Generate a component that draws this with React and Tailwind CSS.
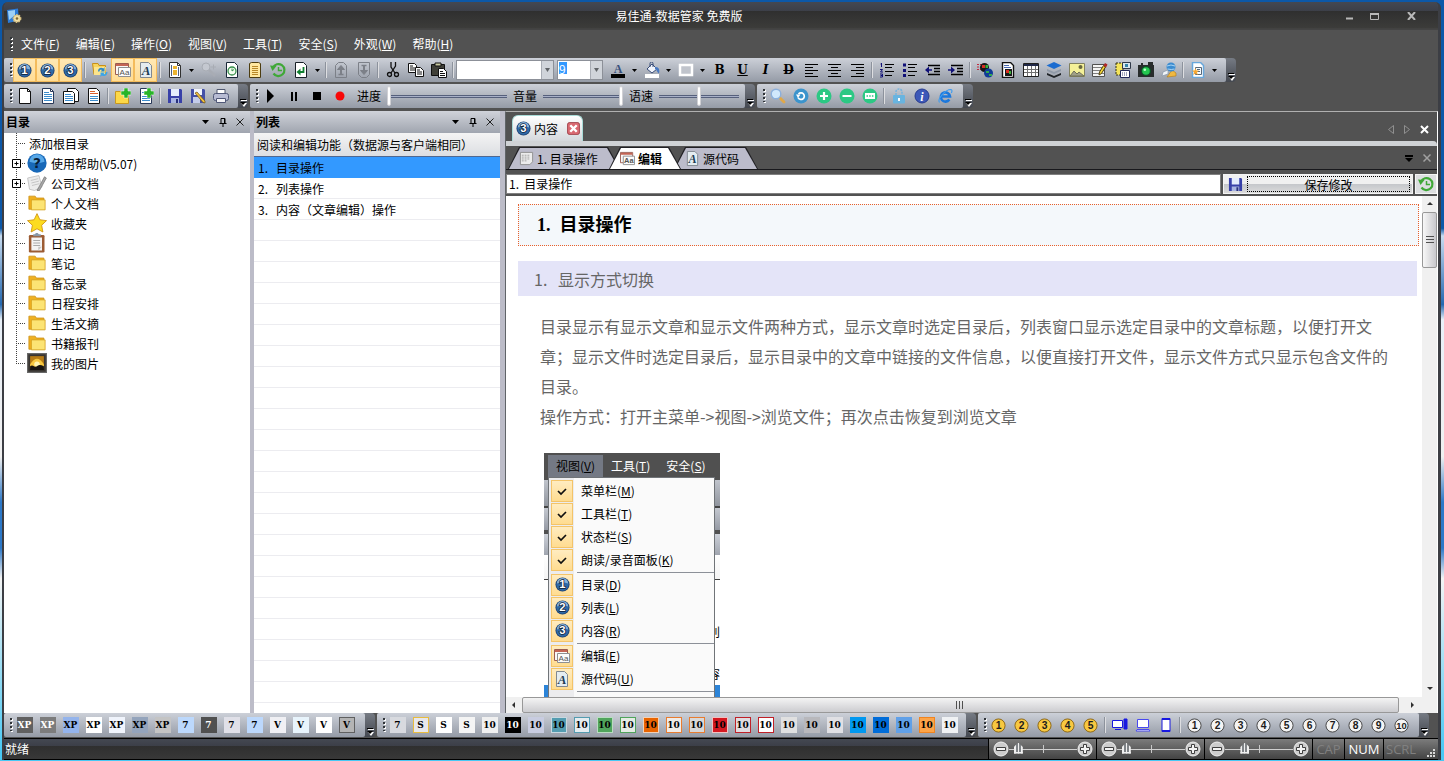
import { useState } from "react";

const menus = [
  ["文件", "F"],
  ["编辑", "E"],
  ["操作", "O"],
  ["视图", "V"],
  ["工具", "T"],
  ["安全", "S"],
  ["外观", "W"],
  ["帮助", "H"],
];

const treeItems = [
  { name: "添加根目录" },
  { name: "使用帮助(V5.07)", icon: "help", expand: true },
  { name: "公司文档", icon: "docs", expand: true },
  { name: "个人文档", icon: "folder" },
  { name: "收藏夹", icon: "star" },
  { name: "日记", icon: "clipboard" },
  { name: "笔记", icon: "folder" },
  { name: "备忘录", icon: "folder" },
  { name: "日程安排", icon: "folder" },
  { name: "生活文摘", icon: "folder" },
  { name: "书籍报刊", icon: "folder" },
  { name: "我的图片", icon: "photo" },
];

const articles = ["目录操作", "列表操作", "内容（文章编辑）操作"];

const themesA = [
  ["XP", "bg-[#606060] text-white"],
  ["XP", "bg-[#7c7c7c] text-white"],
  ["XP", "bg-[#94b4ec] text-black"],
  ["XP", "bg-white text-black"],
  ["XP", "bg-[#f0f4fc] text-black"],
  ["XP", "bg-[#94a4bc] text-black"],
  ["XP", "bg-[#c4c4c4] text-black"],
  ["7", "bg-[#bcd8fc] text-black"],
  ["7", "bg-[#505050] text-white"],
  ["7", "bg-[#e0e0e8] text-black"],
  ["7", "bg-[#bcd8fc] text-black"],
  ["V", "bg-[#f0f0f4] text-black"],
  ["V", "bg-[#e8f4fc] text-black"],
  ["V", "bg-white text-black"],
  ["V", "border border-[#606060] bg-[#b4b4b4] text-black"],
];

const themesB = [
  ["7", "bg-[#d8dadf] text-black"],
  ["S", "border border-[#e8bc40] bg-[#e8e8ec] text-black"],
  ["S", "bg-white text-black"],
  ["S", "bg-[#f4f4f4] text-black"],
  ["10", "bg-[#f0f0f0] text-black"],
  ["10", "bg-black text-white"],
  ["10", "bg-[#c8cce0] text-black"],
  ["10", "border border-[#c8d8e0] bg-[#549cb0] text-black"],
  ["10", "border border-[#549cb0] bg-[#e4ecf0] text-black"],
  ["10", "border border-[#b8dcc0] bg-[#50a45c] text-black"],
  ["10", "border border-[#50a45c] bg-[#e4ece4] text-black"],
  ["10", "border border-[#f0d0b8] bg-[#e86400] text-black"],
  ["10", "border border-[#e87c30] bg-[#f0ece8] text-black"],
  ["10", "border border-[#e87c30] bg-[#d8d8d8] text-black"],
  ["10", "border border-[#f0c0c0] bg-[#d41820] text-black"],
  ["10", "border border-[#c02028] bg-[#e0dce0] text-black"],
  ["10", "border border-[#c02028] bg-white text-black"],
  ["10", "bg-[#e0e0e0] text-black"],
  ["10", "bg-[#b8b8bc] text-black"],
  ["10", "bg-[#e0e0e4] text-black"],
  ["10", "bg-[#0098f0] text-black"],
  ["10", "bg-[#006cd8] text-black"],
  ["10", "bg-[#60a0e8] text-black"],
  ["10", "border border-[#f08420] bg-[#fca448] text-black"],
  ["10", "bg-[#f0f2f4] text-black"],
];

function Svg({ children, size = 16, className = "" }) {
  return (
    <svg width={size} height={size} viewBox="0 0 16 16" className={`shrink-0 ${className}`} aria-hidden="true">
      {children}
    </svg>
  );
}

function Ball({ n }) {
  return (
    <Svg size={15}>
      <circle cx="8" cy="8" r="7.5" fill="#1c3f70" />
      <circle cx="8" cy="8" r="6.6" fill="#2f69a6" />
      <path d="M2 7a6 6 0 0 1 12 0Q8 4.5 2 7Z" fill="#86b0d8" />
      <text
        x="8"
        y="12.2"
        textAnchor="middle"
        fontSize="12"
        fontWeight="700"
        fontFamily="Liberation Sans, sans-serif"
        fill="#fff"
        stroke="#0c1c38"
        strokeWidth="1.6"
        paintOrder="stroke"
      >
        {n}
      </text>
    </Svg>
  );
}

function Coin({ n, gold }) {
  return (
    <Svg size={15}>
      <circle cx="8" cy="8" r="7" fill={gold ? "#f8c840" : "#f4f4f4"} stroke={gold ? "#8a6414" : "#404040"} />
      <text
        x="8"
        y="11.8"
        textAnchor="middle"
        fontSize={n > 9 ? 10 : 11}
        fontWeight="700"
        fontFamily="Liberation Sans, sans-serif"
        fill="#1c1c1c"
      >
        {n}
      </text>
    </Svg>
  );
}

const page = "M2.5 .5h8l3 3v12h-11z";

const icons = {
  app: (
    <>
      <path d="M1 2 12 .5l1 12L2 15z" fill="#2c7cd8" />
      <path d="M2 3 9 2v5L3 12z" fill="#9cd0f8" />
      <circle cx="11" cy="10.5" r="3.6" fill="#f0e0a8" stroke="#d8c080" strokeWidth="1.600" strokeDasharray="1.6 1" />
      <circle cx="11" cy="10.5" r="1.3" fill="#806830" />
    </>
  ),
  sync: (
    <>
      <path d="M.5 1.500h5.500l1 2h6.500v9H2z" fill="#f8d45c" stroke="#c89018" />
      <path d="M2 5h12l-1 8H2z" fill="#fce48c" />
      <path d="M6 9.500C6 6 9 5 11.500 6.500L12.500 5v4.500H8.500L10 8C8.500 7.300 7.500 8 7.500 9.500z" fill="#2c88c8" />
      <path d="M15.500 10c0 3.500-3 5-5.700 3.500L8.500 15v-4.500h4.500L11.500 12c1.500.5 2.500-.5 2.500-2z" fill="#3ca4e8" />
    </>
  ),
  edit: (
    <>
      <path d="M.5 1.500h13v11H.5z" fill="#f8f8f8" stroke="#9c5c50" />
      <path d="M1 2h12v2H1z" fill="#c46454" />
      <path d="M3.500 5.500h12v9h-12z" fill="#fcfcfc" stroke="#909090" />
      <text x="9.500" y="13" textAnchor="middle" fontSize="8" fontFamily="Liberation Sans, sans-serif" fill="#555">
        Aa
      </text>
    </>
  ),
  source: (
    <>
      <path d={page} fill="#e4ecf0" stroke="#808890" />
      <text x="8" y="13" textAnchor="middle" fontSize="13" fontStyle="italic" fontWeight="700" fontFamily="Liberation Serif, serif" fill="#203c54">
        A
      </text>
    </>
  ),
  sheet: (
    <>
      <path d={page} fill="#fff" stroke="#303030" />
      <path d="M4 3h1v11H4zM11 5h1v9h-1z" fill="#506080" />
      <path d="M6 4h4v3H6zM6 8h4v5H6z" fill="#ecb430" />
      <path d="M10.500.5v3h3" fill="none" stroke="#303030" />
    </>
  ),
  zoomGray: (
    <g stroke="#a8acb4" fill="none">
      <circle cx="5" cy="5" r="4" fill="#c4c8d0" />
      <path d="m8 8 6 6" strokeWidth="2.500" />
      <path d="M10 5h5M12.500 2.500v5" />
    </g>
  ),
  clockPage: (
    <>
      <path d={page} fill="#fff" stroke="#182838" />
      <circle cx="8" cy="9" r="4" fill="#f4fff0" stroke="#38904c" strokeWidth="1.300" />
      <path d="M8 9V6.500M8 9l2-1.500" stroke="#38904c" />
    </>
  ),
  list: (
    <>
      <path d="M2.500 1.500 4.500.5h7l2 1v14h-11z" fill="#ffe8a0" stroke="#4c3c10" />
      <path d="M5 4.500h6M5 6.500h6M5 8.500h6M5 10.500h6M5 12.500h6" stroke="#b88828" />
    </>
  ),
  history: (
    <>
      <path d="M3 5.500A6 6 0 1 1 3.500 11.500" fill="none" stroke="#40a838" strokeWidth="2.200" />
      <path d="M0 3.500 6.500 4 2.500 9z" fill="#40a838" />
      <path d="M8.500 5v3.500H12" fill="none" stroke="#40a838" strokeWidth="1.500" />
    </>
  ),
  enter: (
    <>
      <path d={page} fill="#fff" stroke="#182028" />
      <path d="M10.500 5v5H6" fill="none" stroke="#108030" strokeWidth="1.800" />
      <path d="M7.500 6.500v7L3.500 10z" fill="#108030" />
    </>
  ),
  up: (
    <g fill="none" stroke="#7c8088">
      <path d="M2.500 15.500v-12l3-3h5l3 3v12z" />
      <path d="M8 12V5" strokeWidth="2" />
      <path d="M4.500 7.500 8 3.500l3.500 4z" fill="#7c8088" />
      <path d="M5.500 12.500h5" strokeWidth="1.500" />
    </g>
  ),
  down: (
    <g fill="none" stroke="#7c8088">
      <path d="M2.500.5v12l3 3h5l3-3V.5z" />
      <path d="M8 4v6" strokeWidth="2" />
      <path d="M4.500 8.500 8 12.500l3.500-4z" fill="#7c8088" />
      <path d="M5.500 3.500h5" strokeWidth="1.500" />
    </g>
  ),
  cut: (
    <g fill="none" stroke="#101010" strokeWidth="1.300">
      <path d="M6 0v5l4 6M10.500 0v4L6 11" />
      <circle cx="4.500" cy="12.500" r="2" />
      <circle cx="11.500" cy="12.500" r="2" />
    </g>
  ),
  copy: (
    <g fill="#fff" stroke="#101010">
      <path d="M.5 1.500h6l2 2v7h-8z" />
      <path d="M2 4h3M2 6h5M2 8h5" />
      <path d="M7.500 5.500h5l3 3v6h-8z" />
      <path d="M9 8h3M9 10h5M9 12h5" />
    </g>
  ),
  paste: (
    <>
      <path d="M.5 2.500h13v11H.5z" fill="#404038" stroke="#101010" />
      <path d="M4 1h6v3H4z" fill="#c8c8a0" stroke="#101010" />
      <path d="M7.500 6.500h5l3 3v6h-8z" fill="#fff" stroke="#101010" />
      <path d="M9 9.500h3M9 11.500h5M9 13.500h5" stroke="#101010" />
    </>
  ),
  fontColor: (
    <>
      <text x="8" y="11" textAnchor="middle" fontSize="12" fontWeight="700" fontFamily="Liberation Serif, serif" fill="#38507c">
        A
      </text>
      <path d="M1 12h14v4H1z" fill="#000" />
    </>
  ),
  bucket: (
    <>
      <path d="m3 7 5-5 5 5-5 4z" fill="#f0f4fc" stroke="#384c78" />
      <path d="M6 5V1.500a1.500 1.500 0 0 1 3 0V5" fill="none" stroke="#384c78" />
      <path d="M11 5c4-.5 5 3 4 6.500-2-1-1.500-3-4-4.500z" fill="#4878c0" />
      <path d="M1 12h14v4H1z" fill="#fff" />
    </>
  ),
  rect: <path d="M2 3h12v10H2z" fill="#c0c4cc" stroke="#fff" strokeWidth="2.500" />,
  alignLeft: <path d="M1 2.500h13M1 5.500h8M1 8.500h13M1 11.500h8M1 14.500h13" stroke="#000" />,
  alignCenter: <path d="M1 2.500h13M4 5.500h7M1 8.500h13M4 11.500h7M1 14.500h13" stroke="#000" />,
  alignRight: <path d="M1 2.500h13M6 5.500h8M1 8.500h13M6 11.500h8M1 14.500h13" stroke="#000" />,
  ordered: (
    <>
      <path d="M6 2.500h9M6 5.500h7M6 9.500h9M6 13.500h7" stroke="#000" />
      <path d="M2.500 1v4M1.500 2h1M1 7.500h2.500L1.500 10H4M1 12h2.500v3H1M1.500 13.500h2" fill="none" stroke="#101078" />
    </>
  ),
  bullets: (
    <>
      <path d="M6 2.500h9M6 5.500h7M6 9.500h9M6 13.500h7" stroke="#000" />
      <path d="M1 1.500h3v3H1zM1 7h3v3H1zM1 12h3v3H1z" fill="#101078" />
    </>
  ),
  outdent: (
    <>
      <path d="M3 3.500h12M9 6.500h6M9 9.500h6M3 12.500h12" stroke="#000" strokeWidth="1.500" />
      <path d="M4 4.500v7L0 8z" fill="#101078" />
      <path d="M3 8h4" stroke="#101078" strokeWidth="1.500" />
    </>
  ),
  indent: (
    <>
      <path d="M3 3.500h12M9 6.500h6M9 9.500h6M3 12.500h12" stroke="#000" strokeWidth="1.500" />
      <path d="M3 4.500v7L7 8z" fill="#101078" />
      <path d="M0 8h4" stroke="#101078" strokeWidth="1.500" />
    </>
  ),
  globe: (
    <>
      <path d="M0 2.500h5M0 5h5M0 7.500h5" stroke="#c02c40" strokeDasharray="2 1" />
      <circle cx="7.500" cy="5.500" r="4.500" fill="#181818" />
      <path d="M5 3h3v3H5z" fill="#d82c20" />
      <path d="M8.500 3h2.500v3H8.500z" fill="#38b038" />
      <circle cx="11.500" cy="11" r="4.500" fill="#103c98" />
      <path d="M9 9h3v2H9zM12 12h3v2h-3z" fill="#30a850" />
    </>
  ),
  flashPage: (
    <>
      <path d={page} fill="#fff" stroke="#101010" strokeWidth="1.400" />
      <path d="M4 3.500h5M4 5.500h7" stroke="#4868b0" />
      <path d="M5 7h7v7H5z" fill="#181818" />
      <path d="M6 8h3v3H6z" fill="#d82c20" />
      <path d="M9 9h2v3H9z" fill="#38b038" />
    </>
  ),
  table: (
    <>
      <path d="M.5 1.500h15v13H.5z" fill="#fff" stroke="#202020" />
      <path d="M1 2h14v2H1z" fill="#202848" />
      <path d="M1 7.500h14M1 10.500h14M4.500 4v10M8.500 4v10M12.500 4v10" stroke="#707070" />
    </>
  ),
  layers: (
    <>
      <path d="m1 11 7 3 7-3v2l-7 3-7-3z" fill="#202428" />
      <path d="m1 7 7 3 7-3v2l-7 3-7-3z" fill="#909aa8" />
      <path d="m8 0 7.500 3.500L8 7 .5 3.500z" fill="#1c6cd0" />
    </>
  ),
  image: (
    <>
      <path d="M.5 1.500h15v13H.5z" fill="#f4f098" stroke="#808060" />
      <path d="m1 14 4-5 3 3 2-2 5 4z" fill="#a0a088" stroke="#707058" />
      <circle cx="11.500" cy="5" r="2" fill="#686840" />
    </>
  ),
  pencilTable: (
    <>
      <path d="M.5 2.500h12v12H.5z" fill="#f4f4f4" stroke="#505050" />
      <path d="M1 5.500h11M1 8.500h11M1 11.500h11" stroke="#808080" />
      <path d="m7 13 .5-3 4-6.500 2 1.500-4 6.500z" fill="#f4d838" stroke="#504010" />
      <path d="m11.500 3.500 1.500-2.500 2.500 1.500-1.500 3z" fill="#b02828" />
    </>
  ),
  boxes: (
    <>
      <path d="M1 1h7v12H1z" fill="#f4e45c" stroke="#303010" strokeDasharray="2 1" />
      <path d="M7.500.5h8v6h-8z" fill="#d8e8f0" stroke="#303848" />
      <path d="M10 2h3v3h-3z" fill="#3884a8" />
      <path d="M5.500 8.500h9v7h-9z" fill="#fff" stroke="#202858" />
      <path d="M7 11h6M7 13h6" stroke="#404878" strokeDasharray="1 1" />
    </>
  ),
  camera: (
    <>
      <path d="M0 3h3V1h2v2h5V0h5v3h1v12H0z" fill="#282c2c" />
      <circle cx="8" cy="9" r="5" fill="#0c5428" />
      <circle cx="8" cy="9" r="3.800" fill="#24c850" />
      <circle cx="6.800" cy="7.800" r="1.300" fill="#b8ffc8" />
    </>
  ),
  satellite: (
    <>
      <path d="m6 15 9-1v-3l-4-3z" fill="#f0b840" stroke="#b07c18" strokeWidth=".6" />
      <circle cx="10" cy="5" r="4.500" fill="#3c8cd0" />
      <path d="M6 4q4-2 8 0M6.500 7q4 1 7 0" stroke="#a8d4f4" fill="none" />
      <path d="m1 14 1-4 5-2v4z" fill="#f0f4f8" stroke="#7c8ca0" strokeWidth=".6" />
    </>
  ),
  starPage: (
    <>
      <path d={page} fill="#fff" stroke="#68a8dc" strokeWidth="1.500" />
      <path d="M5.500 5.500h6v7h-6z" fill="#f8fcff" stroke="#586878" />
      <path d="M7 7.500h3M7 9.500h3" stroke="#586878" />
      <path d="m5.500 6 1 2.500h2.500l-2 1.700.8 2.800-2.300-1.500L3.200 13l.8-2.800-2-1.700h2.500z" fill="#f8a830" />
    </>
  ),
  blank: (
    <>
      <path d={page} fill="#fff" stroke="#101010" />
      <path d="M10.500.5v3h3" fill="none" stroke="#101010" />
    </>
  ),
  text: (
    <>
      <path d={page} fill="#fff" stroke="#283858" />
      <path d="M4 4.500h5M4 6.500h8M4 8.500h8M4 10.500h8M4 12.500h8" stroke="#3c8ccc" />
      <path d="M10.500.5v3h3" fill="none" stroke="#283858" />
    </>
  ),
  textStack: (
    <>
      <path d="M4.500.5h8l3 3v10h-11z" fill="#fff" stroke="#101010" />
      <path d="M.5 3.500h9l2 2v10H.5z" fill="#fff" stroke="#101010" />
      <path d="M2 6.500h6M2 8.500h8M2 10.500h8M2 12.500h8" stroke="#3c8ccc" />
    </>
  ),
  textRed: (
    <>
      <path d={page} fill="#fff" stroke="#101010" />
      <path d="M4 3.500h5M4 5.500h8" stroke="#d86030" />
      <path d="M4 8.500h8M4 10.500h8M4 12.500h8" stroke="#3c8ccc" />
    </>
  ),
  folderAdd: (
    <>
      <path d="M.5 3.500h5l1 2h7v10H.5z" fill="#fcd848" stroke="#c89820" />
      <path d="M9 0h4v3h3v4h-3v3H9V7H6V3h3z" fill="#28b428" stroke="#fff" strokeWidth=".5" />
    </>
  ),
  pageAdd: (
    <>
      <path d={page} fill="#fff" stroke="#283858" />
      <path d="M4 4.500h5M4 8.500h8M4 10.500h8M4 12.500h8" stroke="#3c8ccc" />
      <path d="M9 0h4v3h3v4h-3v3H9V7H6V3h3z" fill="#28b428" stroke="#fff" strokeWidth=".5" />
    </>
  ),
  save: (
    <>
      <path d="M1 1h13l1 1v13H1z" fill="#3840a8" />
      <path d="M4 1h8v7H4z" fill="#e4ecfc" />
      <path d="M4 10h8v5H4z" fill="#a8b4e0" />
      <path d="M9 11h2v4H9z" fill="#28307c" />
    </>
  ),
  saveEdit: (
    <>
      <path d="M1 1h13l1 1v13H1z" fill="#4450a8" />
      <path d="M4 1h8v6H4z" fill="#f0f4fc" />
      <path d="M3 9h7v6H3z" fill="#c4cce8" />
      <path d="m5 5 2-1 8 9v2l-2-.5z" fill="#f0c040" stroke="#705010" strokeWidth=".7" />
    </>
  ),
  print: (
    <>
      <path d="M4 1.500h8v5H4z" fill="#fff" stroke="#505870" />
      <rect x=".5" y="5.500" width="15" height="7" rx="2" fill="#b8bcd4" stroke="#505878" />
      <path d="M3.500 10.500h9v4h-9z" fill="#f4f4f8" stroke="#505878" />
    </>
  ),
  play: <path d="M4 1v14l7-7z" fill="#000" />,
  pause: <path d="M5 4h2v9H5zM9 4h2v9H9z" fill="#000" />,
  stop: <path d="M4 4h8v8H4z" fill="#000" />,
  record: <circle cx="8" cy="8" r="4.500" fill="#f80808" />,
  search: (
    <>
      <path d="m9 9 5 5" stroke="#e0a848" strokeWidth="2.800" strokeLinecap="round" />
      <circle cx="6" cy="6" r="4.800" fill="#d0e8fc" stroke="#8cb0dc" strokeWidth="1.400" />
    </>
  ),
  refresh: (
    <>
      <circle cx="8" cy="8" r="7.500" fill="#3c94cc" />
      <path d="M5 9.500A3.300 3.300 0 1 0 5.500 6" fill="none" stroke="#fff" strokeWidth="1.700" />
      <path d="M3 6.500h4.500L5 10z" fill="#fff" />
    </>
  ),
  plus: (
    <>
      <circle cx="8" cy="8" r="7.500" fill="#2cc884" />
      <path d="M8 4v8M4 8h8" stroke="#fff" strokeWidth="2.200" />
    </>
  ),
  minus: (
    <>
      <circle cx="8" cy="8" r="7.500" fill="#2cc884" />
      <path d="M3.500 8h9" stroke="#fff" strokeWidth="2.200" />
    </>
  ),
  dots: (
    <>
      <circle cx="8" cy="8" r="7.500" fill="#2cc884" />
      <path d="M3 5h10v6H3z" fill="#fff" />
      <path d="M4.500 8h7" stroke="#2cc884" strokeWidth="1.500" strokeDasharray="1.500 1.200" />
    </>
  ),
  lock: (
    <>
      <path d="M5 7V4a3 3 0 0 1 6 0v3" fill="none" stroke="#78b4dc" strokeWidth="1.600" strokeDasharray="2 1" />
      <rect x="2" y="7" width="12" height="8.500" rx="1" fill="#68b4e0" />
      <path d="M7 10h2v3H7z" fill="#fff" />
    </>
  ),
  info: (
    <>
      <circle cx="8" cy="8" r="7" fill="#3c58b8" stroke="#283c90" />
      <text x="8" y="12.500" textAnchor="middle" fontSize="12" fontStyle="italic" fontWeight="700" fontFamily="Liberation Serif, serif" fill="#fff">
        i
      </text>
    </>
  ),
  ie: (
    <>
      <path d="M4 8.500h9A4.600 4.600 0 1 0 12.300 11.500" fill="none" stroke="#1c78dc" strokeWidth="2.600" />
      <path d="M2.500 14.500C-.5 12 8 1.500 14 1.500c1.500.3 1 2.500.2 3.500" fill="none" stroke="#3c9cf0" strokeWidth="1.200" />
    </>
  ),
  help: (
    <>
      <circle cx="8" cy="8" r="7.700" fill="#1868b8" />
      <path d="M2 7a6 6 0 0 1 12 0Q8 9 2 7Z" fill="#58a8e8" />
      <text x="8" y="12" textAnchor="middle" fontSize="11" fontWeight="700" fontFamily="DejaVu Sans, sans-serif" fill="#081c34">
        ?
      </text>
    </>
  ),
  docs: (
    <>
      <path d="m.5 4 9-2 2.500 9-6 3-4-1z" fill="#ececec" stroke="#b8b8b8" strokeWidth=".6" />
      <path d="m3 6 6-1.500M3.500 8l6-1.500M4 10l6-1.500" stroke="#b8b8b8" strokeWidth=".6" />
      <path d="m8 14 6-11 1.500 1L10 14z" fill="#a8a8a8" stroke="#686868" strokeWidth=".5" />
    </>
  ),
  folder: (
    <>
      <path d="M1.500 2.500h5l1 1.500h6v9h-12z" fill="#f0b020" stroke="#c88c10" strokeWidth=".6" />
      <path d="M3.500 5.500h11v8h-11z" fill="#fce474" stroke="#d09c18" strokeWidth=".6" />
    </>
  ),
  star: (
    <path
      d="m8 .5 2.300 4.900 5.300.7-3.900 3.700 1 5.400L8 12.600l-4.700 2.600 1-5.400L.4 6.100l5.300-.7z"
      fill="#fcdc20"
      stroke="#d09410"
      strokeWidth=".7"
    />
  ),
  clipboard: (
    <>
      <rect x="1.500" y="1.500" width="12.500" height="14" rx="1" fill="#9c5c34" />
      <path d="M3.500 3.500h8.500v10.500H3.500z" fill="#f4f4f4" />
      <path d="M5 6h5.500M5 8h5.500M5 10h5.500" stroke="#a0a0a0" strokeWidth=".7" />
      <path d="M5 2.500h6V1H9.500L8.500 0h-1.500l-.5 1H5z" fill="#8898a8" />
      <path d="M9 14v-3h3z" fill="#c8c8c8" />
    </>
  ),
  photo: (
    <>
      <path d="M.5.5h15v15H.5z" fill="#383430" stroke="#686868" />
      <path d="M2.500 2.500h11v10h-11z" fill="#b87c14" />
      <path d="M2.500 9q5.500-9 11 0v2h-11z" fill="#f8c840" />
      <circle cx="8" cy="9" r="2.200" fill="#fff4b0" />
      <path d="M2.500 10.500q1.500-1 3 0t3-.3 5 .3v3h-11z" fill="#181410" />
    </>
  ),
  monitor: (
    <>
      <path d="M.5 3.500h10v7H.5z" fill="#fff" stroke="#1818e0" />
      <path d="M3 12.500h6" stroke="#1818e0" />
      <path d="M12 2h3v10h-3z" fill="#1818e0" stroke="#1818e0" />
    </>
  ),
  laptop: (
    <>
      <path d="M2.500 2.500h11v8h-11z" fill="#fff" stroke="#4848f0" />
      <path d="m2 12.500-1 1.500h14l-1-1.500z" fill="#fff" stroke="#4848f0" />
    </>
  ),
  phone: (
    <>
      <path d="M4 1.500h8v13H4z" fill="#fff" stroke="#1818e0" />
      <path d="M4 2h8M4 14h8" stroke="#1818e0" strokeWidth="2" />
    </>
  ),
  note: (
    <>
      <path d="M1.500 1.500h13v10l-3 3h-10z" fill="#ececec" stroke="#909090" />
      <path d="M3 4.500h9M3 6.500h9M3 8.500h8M3 10.500h6" stroke="#a0a0a0" strokeDasharray="2 1" />
    </>
  ),
  check: <path d="m4 8 3 3 5-5" fill="none" stroke="#101010" strokeWidth="1.700" />,
};

function Icon({ name, size = 16 }) {
  return <Svg size={size}>{icons[name]}</Svg>;
}

function Tool({ name, label, active, children }) {
  return (
    <button
      type="button"
      aria-label={label ?? name}
      className={`flex w-[23px] shrink-0 items-center justify-center ${
        active ? "border border-[#f4bc5c] bg-linear-to-b from-[#ffe8b4] to-[#ffdc94]" : ""
      }`}
    >
      {children ?? <Icon name={name} />}
    </button>
  );
}

function Letter({ children, className = "" }) {
  return (
    <Tool label={children}>
      <span className={`font-['DejaVu_Serif',serif] text-xs font-bold leading-4 text-black ${className}`}>{children}</span>
    </Tool>
  );
}

function Caret({ label }) {
  return (
    <button type="button" aria-label={label} className="flex w-[11px] shrink-0 items-center justify-center">
      <svg width="5" height="3" viewBox="0 0 5 3" aria-hidden="true">
        <path d="M0 0h5L2.500 3z" fill="#000" />
      </svg>
    </button>
  );
}

function Divider() {
  return (
    <span className="flex w-1.5 shrink-0 items-center justify-center">
      <span className="h-4 w-0.5 border-r border-white/70 bg-[#8c929c]" />
    </span>
  );
}

function Grip() {
  return (
    <span className="flex w-[9px] shrink-0 items-center justify-end">
      <svg width="3" height="14" viewBox="0 0 3 14" aria-hidden="true">
        <path d="M2 1v13" stroke="#fff" strokeWidth="2" strokeDasharray="2 2" />
        <path d="M1 0v13" stroke="#303438" strokeWidth="2" strokeDasharray="2 2" />
      </svg>
    </span>
  );
}

function Toolbar({ label, className = "", children }) {
  return (
    <div
      role="toolbar"
      aria-label={label}
      className={`flex h-6 shrink-0 overflow-hidden rounded-l-xs rounded-r bg-linear-to-b from-[#767b84] to-[#444850] ${className}`}
    >
      <div className="flex flex-1 rounded-r-xs bg-linear-to-b from-[#ccd0d8] to-[#959ba6]">
        <Grip />
        {children}
      </div>
      <button type="button" aria-label="更多按钮" className="flex w-2.5 items-end justify-center pb-px">
        <svg width="7" height="8" viewBox="0 0 7 8" aria-hidden="true">
          <path d="M1 1.500h6" stroke="#fff" />
          <path d="M1 4h6L4 8z" fill="#fff" />
          <path d="M0 .5h6" stroke="#000" />
          <path d="M0 3h6L3 6z" fill="#000" />
        </svg>
      </button>
    </div>
  );
}

function Combo({ label, className, children }) {
  return (
    <div className={`my-0.5 mr-[3px] flex shrink-0 border border-[#8c9098] bg-white ${className}`}>
      {children}
      <button type="button" aria-label={label} className="ml-auto flex w-3 items-center justify-center border-l border-[#a8acb4] bg-[#d0d4da]">
        <svg width="5" height="4" viewBox="0 0 5 4" aria-hidden="true">
          <path d="M0 0h5L2.500 4z" fill="#606468" />
        </svg>
      </button>
    </div>
  );
}

function ToolSlider({ label, value, className }) {
  return (
    <label className="flex items-center text-xs text-black">
      <span className="mx-1.5">{label}</span>
      <input
        type="range"
        defaultValue={value}
        className={`h-5 appearance-none bg-transparent [&::-webkit-slider-runnable-track]:h-[3px] [&::-webkit-slider-runnable-track]:border-y [&::-webkit-slider-runnable-track]:border-[#56607c] [&::-webkit-slider-runnable-track]:bg-[#a8b0c8] [&::-webkit-slider-thumb]:-mt-[10px] [&::-webkit-slider-thumb]:h-5 [&::-webkit-slider-thumb]:w-1 [&::-webkit-slider-thumb]:appearance-none [&::-webkit-slider-thumb]:rounded-sm [&::-webkit-slider-thumb]:border [&::-webkit-slider-thumb]:border-[#d0d0d4] [&::-webkit-slider-thumb]:bg-white ${className}`}
      />
    </label>
  );
}

function PanelHead({ title }) {
  return (
    <header className="flex h-[22px] shrink-0 items-center bg-linear-to-b from-[#d0d3da] to-[#a0a5af] pl-0.5 text-xs font-bold text-black">
      <h2>{title}</h2>
      <button type="button" aria-label="菜单" className="ml-auto flex w-[17px] justify-center">
        <svg width="7" height="4" viewBox="0 0 7 4" aria-hidden="true">
          <path d="M0 0h7L3.500 4z" fill="#000" />
        </svg>
      </button>
      <button type="button" aria-label="固定" className="flex w-[17px] justify-center">
        <svg width="8" height="9" viewBox="0 0 8 9" aria-hidden="true">
          <path d="M2 5V.5h4V5M5.500.5V5M.5 5.500h7M4 6v3" fill="none" stroke="#000" />
        </svg>
      </button>
      <button type="button" aria-label="关闭" className="mr-0.5 flex w-[17px] justify-center">
        <svg width="8" height="8" viewBox="0 0 8 8" aria-hidden="true">
          <path d="m.5.5 7 7m0-7-7 7" stroke="#202020" />
        </svg>
      </button>
    </header>
  );
}

function Tree() {
  const last = treeItems.length - 1;
  return (
    <ul>
      {treeItems.map((item, i) => (
        <li key={item.name} className="flex h-5 items-center whitespace-nowrap text-xs text-black">
          <svg width="23" height="20" viewBox="0 0 23 20" className="shrink-0" aria-hidden="true">
            <path
              d={i === last ? "M12.500 0v10M12 10.500h10" : "M12.500 0v20M12 10.500h10"}
              fill="none"
              stroke="#404040"
              strokeDasharray="1 1"
            />
            {item.expand && <path d="M8.500 6.500h8v8h-8zM10.500 10.500h4M12.500 8.500v4" fill="#fff" stroke="#000" />}
          </svg>
          {item.icon && (
            <span className="mr-1 flex">
              <Icon name={item.icon} size={20} />
            </span>
          )}
          <a href="#tree" className={item.icon ? "pt-0.5" : "ml-0.5 pt-0.5"}>
            {item.name}
          </a>
        </li>
      ))}
    </ul>
  );
}

function DocTab({ icon, active, onClick, className, children }) {
  return (
    <button
      type="button"
      onClick={onClick}
      className={`relative flex pt-px [clip-path:polygon(11px_0,calc(100%-12px)_0,100%_100%,0_100%)] bg-[#202024] ${active ? "z-10" : ""} ${className}`}
    >
      <span
        className={`mx-px flex h-full w-full items-center gap-[3px] pl-2.5 text-xs text-black [clip-path:polygon(11px_0,calc(100%-12px)_0,100%_100%,0_100%)] ${
          active ? "bg-white font-bold" : "bg-[#bcbccb]"
        }`}
      >
        <Icon name={icon} size={15} />
        {children}
      </span>
    </button>
  );
}

function ShotRow({ icon, n, text, k }) {
  return (
    <div className="flex h-[23px] items-center">
      <span className="ml-0.5 mr-2 flex h-[22px] w-[22px] items-center justify-center border border-[#f4c468] bg-linear-to-b from-[#ffecc0] to-[#ffdc90]">
        {n ? <Ball n={n} /> : <Icon name={icon} />}
      </span>
      <span>
        {text}(<u>{k}</u>)
      </span>
    </div>
  );
}

function ShotLine() {
  return <div className="ml-7 h-0.5 border-b border-[#8c9098]" />;
}

function MenuShot() {
  return (
    <figure className="relative ml-[26px] mt-[22px] w-44 overflow-hidden bg-[linear-gradient(180deg,#505050_0,#505050_27px,#c0c4cc_27px,#90959e_53px,#444_53px,#444_55px,#c4c8d0_55px,#959aa4_77px,#505050_77px,#505050_81px,#ccd0d8_81px,#a0a5af_102px,#fff_102px,#f4f4f4_126px,#404040_126px,#404040_127px,#fff_127px,#fff_232px,#2c84d8_232px)] text-xs text-black">
      <span className="absolute right-0 top-[171px]">别</span>
      <span className="absolute right-0 top-[213px]">容</span>
      <div className="flex h-6 items-end pl-1 text-white">
        <span className="flex h-[22px] items-center bg-[#747984] px-2 text-black">
          <span>
            视图(<u>V</u>)
          </span>
        </span>
        <span className="flex h-[22px] items-center px-2">
          <span>
            工具(<u>T</u>)
          </span>
        </span>
        <span className="flex h-[22px] items-center px-2">
          <span>
            安全(<u>S</u>)
          </span>
        </span>
      </div>
      <div className="relative ml-1 mr-[5px] border border-b-0 border-[#707478] bg-[linear-gradient(90deg,#ececee_25px,#fafafa_25px)] pt-px">
        <ShotRow icon="check" text="菜单栏" k="M" />
        <ShotRow icon="check" text="工具栏" k="T" />
        <ShotRow icon="check" text="状态栏" k="S" />
        <ShotRow icon="check" text="朗读/录音面板" k="K" />
        <ShotLine />
        <ShotRow n={1} text="目录" k="D" />
        <ShotRow n={2} text="列表" k="L" />
        <ShotRow n={3} text="内容" k="R" />
        <ShotLine />
        <ShotRow icon="edit" text="编辑" k="E" />
        <ShotRow icon="source" text="源代码" k="U" />
        <ShotLine />
        <div className="h-6" />
      </div>
    </figure>
  );
}

function Arrow({ d, label, className }) {
  return (
    <button type="button" aria-label={label} className={`flex shrink-0 items-center justify-center ${className}`}>
      <svg width="8" height="8" viewBox="0 0 8 8" aria-hidden="true">
        <path d={d} fill="#303030" />
      </svg>
    </button>
  );
}

function Editor() {
  const [tab, setTab] = useState("edit");
  const [title, setTitle] = useState("1.  目录操作");

  return (
    <section className="flex min-w-0 flex-1 flex-col border-l border-r border-l-[#606468] border-r-white border-t border-t-[#b0b0b0] bg-[#525252]">
      <div className="flex h-[29px] shrink-0 items-end pl-[6px]">
        <div className="flex h-[26px] w-[71px] items-center rounded-t-md border border-b-0 border-[#a8dcd8] bg-linear-to-b from-white to-[#d4d8dc] pl-[3px] text-xs text-black">
          <Ball n={3} />
          <span className="ml-[3px]">内容</span>
          <button type="button" aria-label="关闭内容" className="ml-auto mr-0.5">
            <Svg size={13}>
              <rect x=".5" y=".5" width="15" height="15" rx="3" fill="#d86870" stroke="#983840" />
              <path d="m4 4 8 8m0-8-8 8" stroke="#fff" strokeWidth="3" />
            </Svg>
          </button>
        </div>
        <div className="ml-auto mr-2 flex h-6 items-center gap-2.5 self-end">
          <button type="button" aria-label="上一个">
            <svg width="6" height="9" viewBox="0 0 6 9" aria-hidden="true">
              <path d="M5.500.5v8l-5-4z" fill="none" stroke="#909090" />
            </svg>
          </button>
          <button type="button" aria-label="下一个">
            <svg width="6" height="9" viewBox="0 0 6 9" aria-hidden="true">
              <path d="M.5.5v8l5-4z" fill="none" stroke="#909090" />
            </svg>
          </button>
          <button type="button" aria-label="关闭">
            <svg width="9" height="9" viewBox="0 0 9 9" aria-hidden="true">
              <path d="m1 1 7 7m0-7L1 8" stroke="#fff" strokeWidth="2" />
            </svg>
          </button>
        </div>
      </div>
      <div className="h-[5px] shrink-0 rounded-tr bg-[#d0d3d6]" />
      <div className="flex h-6 shrink-0 border-b border-[#18181c] pl-0.5 pt-px">
        <DocTab icon="note" active={tab === "doc"} onClick={() => setTab("doc")} className="w-28">
          1. 目录操作
        </DocTab>
        <DocTab icon="edit" active={tab === "edit"} onClick={() => setTab("edit")} className="-ml-[11px] w-[72px]">
          编辑
        </DocTab>
        <DocTab icon="source" active={tab === "source"} onClick={() => setTab("source")} className="-ml-[7px] w-[84px]">
          源代码
        </DocTab>
        <div className="ml-auto mr-1.5 flex items-center gap-2.5">
          <button type="button" aria-label="标签列表">
            <svg width="8" height="7" viewBox="0 0 8 7" aria-hidden="true">
              <path d="M0 0h8v2H0zM0 3h8L4 7z" fill="#000" />
            </svg>
          </button>
          <button type="button" aria-label="关闭标签">
            <svg width="8" height="8" viewBox="0 0 8 8" aria-hidden="true">
              <path d="m.5.5 7 7m0-7-7 7" stroke="#a0a0a0" strokeWidth="1.500" />
            </svg>
          </button>
        </div>
      </div>
      <div className="flex h-6 shrink-0 items-stretch pt-1">
        <input
          type="text"
          aria-label="标题"
          value={title}
          onChange={(e) => setTitle(e.target.value)}
          className="min-w-0 flex-1 border border-[#808080] bg-white px-0.5 text-xs leading-4 text-black"
        />
        <button
          type="button"
          className="ml-0.5 flex w-[190px] items-center border border-[#f4f4f4] bg-[linear-gradient(180deg,#f0f0f0_50%,#c4c6ca_50%,#dcdcdc)] pl-1 text-xs text-black"
        >
          <Icon name="save" size={15} />
          <span className="ml-1 mr-0.5 flex h-4 flex-1 items-center justify-center border border-dotted border-black pt-0.5">
            保存修改
          </span>
        </button>
        <button type="button" aria-label="历史" className="ml-0.5 flex w-[22px] items-center justify-center border border-[#f4f4f4] bg-[#dcdee0]">
          <Icon name="history" />
        </button>
      </div>
      <div className="mt-0.5 flex min-h-0 flex-1 bg-white">
        <article className="min-w-0 flex-1 overflow-hidden pl-3 pt-2">
          <h1 className="mr-[3px] flex h-[42px] items-center whitespace-pre border border-dotted border-[#e8602c] bg-[#f4f8fb] pl-[18px] font-['Liberation_Serif','Noto_Sans_CJK_SC',serif] text-lg font-bold text-black">
            {"1.  目录操作"}
          </h1>
          <h2 className="mr-[5px] mt-[15px] flex h-[35px] items-center whitespace-pre bg-[#e4e4f8] pl-4 text-base text-[#666]">
            {"1.   显示方式切换"}
          </h2>
          <div className="ml-[22px] mr-8 mt-[15px] text-base leading-[30px] text-[#666]">
            <p>
              目录显示有显示文章和显示文件两种方式，显示文章时选定目录后，列表窗口显示选定目录中的文章标题，以便打开文章；显示文件时选定目录后，显示目录中的文章中链接的文件信息，以便直接打开文件，显示文件方式只显示包含文件的目录。
            </p>
            <p>操作方式：打开主菜单-&gt;视图-&gt;浏览文件；再次点击恢复到浏览文章</p>
          </div>
          <MenuShot />
        </article>
        <div className="flex w-[15px] shrink-0 flex-col bg-[#f0f0f0]">
          <Arrow label="向上" d="M4 2 7 5H1z" className="h-4" />
          <div className="flex h-14 items-center justify-center rounded-xs border border-[#989898] bg-linear-to-r from-[#f8f8f8] to-[#c8c8cc]">
            <svg width="8" height="9" viewBox="0 0 8 9" aria-hidden="true">
              <path d="M0 .5h8M0 3.500h8M0 6.500h8" stroke="#505050" />
            </svg>
          </div>
          <Arrow label="向下" d="M4 5 1 2h6z" className="mt-auto h-4" />
        </div>
      </div>
      <div className="flex h-4 shrink-0 bg-[#f0f0f0]">
        <Arrow label="向左" d="M2 4 5 1v6z" className="w-4" />
        <div className="flex flex-1 items-center justify-center rounded-xs border border-[#989898] bg-linear-to-b from-[#f4f4f4] to-[#ccccd0]">
          <svg width="9" height="8" viewBox="0 0 9 8" aria-hidden="true">
            <path d="M.5 0v8M3.500 0v8M6.500 0v8" stroke="#505050" />
          </svg>
        </div>
        <Arrow label="向右" d="M5 4 2 1v6z" className="mr-2.5 w-7" />
      </div>
    </section>
  );
}

function ThemeChip({ text, look }) {
  return (
    <Tool label={text}>
      <span className={`flex h-4 w-4 items-center justify-center font-['DejaVu_Serif',serif] text-[9px] font-bold leading-none ${look}`}>
        {text}
      </span>
    </Tool>
  );
}

function Zoom({ value, label }) {
  return (
    <div className="flex w-[108px] items-center justify-center border-l border-black">
      <button type="button" aria-label={`${label}缩小`}>
        <Svg>
          <circle cx="8" cy="8" r="7" fill="#ccc" stroke="#f0f0f0" />
          <path d="M3.500 6.500h9v3h-9z" fill="#f4f4f4" stroke="#404040" />
        </Svg>
      </button>
      <span className="flex h-4 w-[68px] items-center bg-[linear-gradient(90deg,transparent_34px,#c8c8c8_34px,#c8c8c8_35px,transparent_35px)] bg-[length:100%_8px] bg-center bg-no-repeat">
        <input
          type="range"
          aria-label={label}
          defaultValue={value}
          className="h-4 w-full appearance-none bg-transparent [&::-webkit-slider-runnable-track]:h-px [&::-webkit-slider-runnable-track]:bg-[#d0d0d0] [&::-webkit-slider-thumb]:-mt-[6px] [&::-webkit-slider-thumb]:h-[11px] [&::-webkit-slider-thumb]:w-[9px] [&::-webkit-slider-thumb]:appearance-none [&::-webkit-slider-thumb]:bg-[linear-gradient(0deg,#f0f0f0_2px,transparent_2px),linear-gradient(90deg,#f0f0f0_2px,#808488_2px,#808488_4px,#f0f0f0_4px,#f0f0f0_5px,#808488_5px,#808488_7px,#f0f0f0_7px)] [&::-webkit-slider-thumb]:[clip-path:polygon(50%_0,100%_40%,100%_100%,0_100%,0_40%)]"
        />
      </span>
      <button type="button" aria-label={`${label}放大`}>
        <Svg>
          <circle cx="8" cy="8" r="7" fill="#ccc" stroke="#f0f0f0" />
          <path d="M6.500 3.500h3v3h3v3h-3v3h-3v-3h-3v-3h3z" fill="#f4f4f4" stroke="#404040" />
        </Svg>
      </button>
    </div>
  );
}

export default function App() {
  return (
    <div className="flex h-screen flex-col overflow-hidden bg-[linear-gradient(180deg,#0c58a8_0,#0c58a8_30%,#c8dcf0_31%,#2468b0_40%,#e8f0f8_42%,#f0f0f0_60%,#2c78c8_66%,#2c78c8_72%,#f4f4f4_76%,#48c8f4_99%)] pb-px pl-0.5 pr-[3px] pt-0.5 font-['Noto_Sans_CJK_SC',sans-serif]">
      <div className="flex min-h-0 flex-1 flex-col overflow-hidden rounded-t-md border-l-2 border-r-[3px] border-[#3c3e44] bg-[#525252]">
        <header className="flex h-7 shrink-0 items-center border-b border-[#444] bg-[linear-gradient(180deg,#444852_0,#3c3f48_9px,#2f2f2f_9px,#3c3c3a_26px,#484848)] pl-0.5">
          <Icon name="app" />
          <h1 className="flex-1 pr-2.5 pt-px text-center text-xs text-white">易佳通-数据管家 免费版</h1>
          <div className="mr-[22px] flex items-center gap-4">
            <button type="button" aria-label="最小化">
              <svg width="8" height="9" viewBox="0 0 8 9" aria-hidden="true">
                <path d="M0 7.500h7" stroke="#b8b8b8" strokeWidth="2" />
              </svg>
            </button>
            <button type="button" aria-label="最大化">
              <svg width="9" height="8" viewBox="0 0 9 8" aria-hidden="true">
                <path d="M.5 1.500h8v6h-8z" fill="none" stroke="#b8b8b8" />
                <path d="M0 1h9v2H0z" fill="#b8b8b8" />
              </svg>
            </button>
            <button type="button" aria-label="关闭窗口" className="ml-3">
              <svg width="9" height="8" viewBox="0 0 9 8" aria-hidden="true">
                <path d="m1 0 7 8m0-8L1 8" stroke="#b8b8b8" strokeWidth="2" />
              </svg>
            </button>
          </div>
        </header>

        <nav className="flex h-7 shrink-0 items-center text-xs text-white">
          <Grip />
          {menus.map(([name, key]) => (
            <button key={key} type="button" className="px-2">
              {name}(<u>{key}</u>)
            </button>
          ))}
        </nav>

        <div className="flex shrink-0">
          <Toolbar label="格式">
            <Tool label="目录" active>
              <Ball n={1} />
            </Tool>
            <Tool label="列表" active>
              <Ball n={2} />
            </Tool>
            <Tool label="内容" active>
              <Ball n={3} />
            </Tool>
            <Divider />
            <Tool name="sync" />
            <Tool name="edit" active />
            <Tool name="source" active />
            <Divider />
            <Tool name="sheet" />
            <Caret label="表单选项" />
            <Tool name="zoomGray" />
            <Tool name="clockPage" />
            <Tool name="list" />
            <Tool name="history" />
            <Tool name="enter" />
            <Caret label="插入选项" />
            <Divider />
            <Tool name="up" />
            <Tool name="down" />
            <Divider />
            <Tool name="cut" />
            <Tool name="copy" />
            <Tool name="paste" />
            <Divider />
            <Combo label="选择字体" className="w-[98px]">
              <input type="text" aria-label="字体" className="min-w-0 flex-1 px-1 text-xs" />
            </Combo>
            <Combo label="选择字号" className="w-[46px]">
              <input
                type="text"
                aria-label="字号"
                defaultValue="9"
                className="ml-px mt-px h-3 w-2 bg-[#3399ff] text-xs leading-3 text-white"
              />
            </Combo>
            <Tool name="fontColor" />
            <Caret label="字体颜色" />
            <Tool name="bucket" />
            <Caret label="背景颜色" />
            <Tool name="rect" />
            <Caret label="边框颜色" />
            <Letter>B</Letter>
            <Letter className="underline">U</Letter>
            <Letter className="italic">I</Letter>
            <Letter className="line-through">D</Letter>
            <Tool name="alignLeft" />
            <Tool name="alignCenter" />
            <Tool name="alignRight" />
            <Divider />
            <Tool name="ordered" />
            <Tool name="bullets" />
            <Tool name="outdent" />
            <Tool name="indent" />
            <Divider />
            <Tool name="globe" />
            <Tool name="flashPage" />
            <Tool name="table" />
            <Tool name="layers" />
            <Tool name="image" />
            <Tool name="pencilTable" />
            <Tool name="boxes" />
            <Tool name="camera" />
            <Tool name="satellite" />
            <Divider />
            <Tool name="starPage" />
            <Caret label="模板选项" />
            <span className="w-1.5" />
          </Toolbar>
        </div>

        <div className="mb-[3px] mt-0.5 flex shrink-0 gap-0.5">
          <Toolbar label="文件" className="w-[244px]">
            <Tool name="blank" />
            <Tool name="text" />
            <Tool name="textStack" />
            <Tool name="textRed" />
            <Divider />
            <Tool name="folderAdd" />
            <Tool name="pageAdd" />
            <Divider />
            <Tool name="save" />
            <Tool name="saveEdit" />
            <Tool name="print" />
          </Toolbar>
          <Toolbar label="朗读" className="w-[505px]">
            <Tool name="play" />
            <Tool name="pause" />
            <Tool name="stop" />
            <Tool name="record" />
            <ToolSlider label="进度" value={0} className="w-[120px]" />
            <ToolSlider label="音量" value={100} className="w-20" />
            <ToolSlider label="语速" value={50} className="w-20" />
          </Toolbar>
          <Toolbar label="网络" className="w-[216px]">
            <Tool name="search" />
            <Tool name="refresh" />
            <Tool name="plus" />
            <Tool name="minus" />
            <Tool name="dots" />
            <Divider />
            <Tool name="lock" />
            <Tool name="info" />
            <Tool name="ie" />
          </Toolbar>
        </div>

        <main className="flex min-h-0 flex-1 bg-[#bcbcc8]">
          <aside className="mr-1 flex w-[246px] shrink-0 flex-col bg-white">
            <PanelHead title="目录" />
            <Tree />
          </aside>
          <aside className="mr-[5px] flex w-[246px] shrink-0 flex-col bg-white">
            <PanelHead title="列表" />
            <div className="flex h-6 shrink-0 items-center whitespace-nowrap border-b border-[#506890] bg-linear-to-b from-[#f4f4f4] to-[#dcdee2] pl-[3px] text-xs text-black">
              阅读和编辑功能（数据源与客户端相同）
            </div>
            <ul className="flex-1 bg-[repeating-linear-gradient(180deg,#fff_0,#fff_20px,#ececf0_20px,#ececf0_21px)] text-xs">
              {articles.map((name, i) => (
                <li key={name} className={`flex h-[21px] items-center pl-1 text-black ${i === 0 ? "bg-[#3399ff]" : ""}`}>
                  <span className="w-[18px]">{i + 1}.</span>
                  <a href="#article">{name}</a>
                </li>
              ))}
            </ul>
          </aside>
          <Editor />
        </main>

        <div className="mb-px flex shrink-0 gap-0.5">
          <Toolbar label="主题一" className="w-[371px]">
            {themesA.map(([text, look], i) => (
              <ThemeChip key={i} text={text} look={look} />
            ))}
          </Toolbar>
          <Toolbar label="主题二" className="w-[599px]">
            {themesB.map(([text, look], i) => (
              <ThemeChip key={i} text={text} look={look} />
            ))}
          </Toolbar>
          <Toolbar label="布局" className="w-[451px]">
            {[1, 2, 3, 4, 5].map((n) => (
              <Tool key={n} label={`布局${n}`}>
                <Coin n={n} gold />
              </Tool>
            ))}
            <Divider />
            <Tool name="monitor" />
            <Tool name="laptop" />
            <Tool name="phone" />
            <Divider />
            {[1, 2, 3, 4, 5, 6, 7, 8, 9, 10].map((n) => (
              <Tool key={n} label={`方案${n}`}>
                <Coin n={n} />
              </Tool>
            ))}
          </Toolbar>
        </div>

        <footer className="flex h-[22px] shrink-0 items-stretch border-b border-t border-black bg-[linear-gradient(180deg,#444852_0,#3c3f48_7px,#2f2f2f_7px,#383838)] font-['Open_Sans','Noto_Sans_CJK_SC',sans-serif] text-[13px] text-white">
          <span className="flex items-center pl-px pt-0.5 text-xs">就绪</span>
          <div className="ml-auto flex bg-linear-to-b from-[#7c7c7c] to-[#444]">
            <Zoom label="目录比例" value={9} />
            <Zoom label="列表比例" value={9} />
            <Zoom label="内容比例" value={27} />
            <span className="flex w-8 items-center justify-center border-l border-black pt-0.5 text-[#808080]">CAP</span>
            <span className="flex w-[39px] items-center justify-center border-l border-black pt-0.5">NUM</span>
            <span className="flex w-[55px] items-center border-l border-black pl-0.5 pt-0.5 text-[#808080]">
              SCRL
              <svg width="10" height="10" viewBox="0 0 10 10" className="ml-auto mr-0.5 self-end" aria-hidden="true">
                <path d="M7 0h2v2H7zM4 3h2v2H4zM7 3h2v2H7zM1 6h2v2H1zM4 6h2v2H4zM7 6h2v2H7z" fill="#d8d8d8" />
              </svg>
            </span>
          </div>
        </footer>
      </div>
    </div>
  );
}
